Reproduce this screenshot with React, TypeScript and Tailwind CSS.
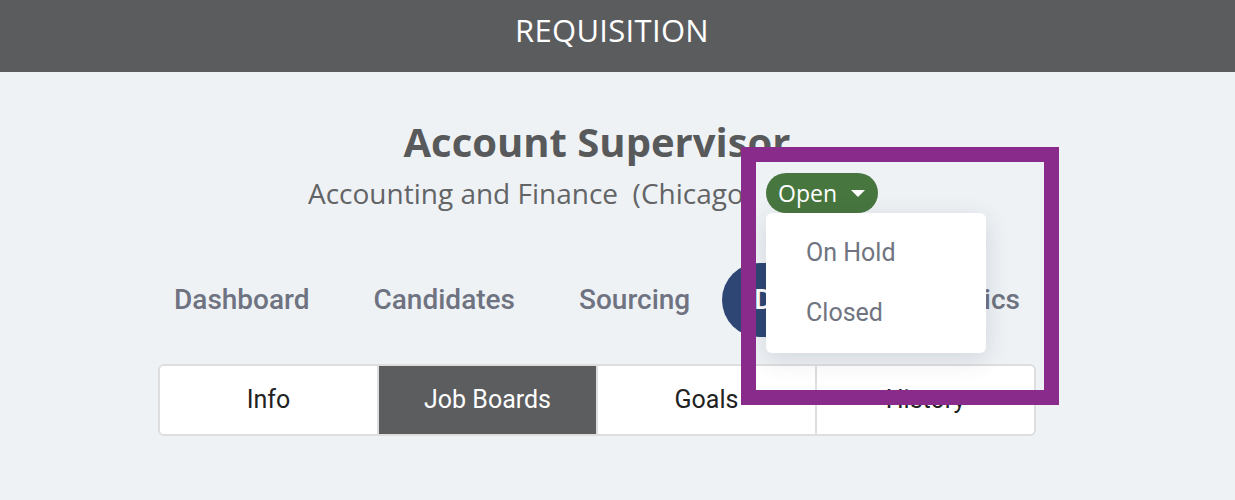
import { useState } from "react";

const navTabs = ["Dashboard", "Candidates", "Sourcing", "Details", "Analytics"];
const subTabs = ["Info", "Job Boards", "Goals", "History"];
const statusOptions = ["On Hold", "Closed"];

function Caret() {
	return (
		<svg className="h-[7px] w-[14px]" viewBox="0 0 14 7" fill="currentColor">
			<path d="M0 0h14L7 7z" />
		</svg>
	);
}

export default function App() {
	const [activeNav] = useState("Details");
	const [activeSub] = useState("Job Boards");

	return (
		<div className="min-h-[500px] w-full bg-[#eef2f5] font-['Open_Sans',sans-serif]">
			{/* Top bar */}
			<div className="flex h-[72px] items-center justify-center bg-[#5b5c5e] pr-[11px] pb-[12px]">
				<h1 className="text-[31px] font-normal tracking-[0.3px] text-white">REQUISITION</h1>
			</div>

			<div className="flex flex-col items-center pr-[41px]">
				{/* Title */}
				<h2 className="mt-[46px] text-[40px] leading-[48px] font-bold text-[#58595b]">
					Account Supervisor
				</h2>

				{/* Department + status */}
				<div className="mt-[7px] mr-2 flex h-[40px] items-center">
					<span className="text-[28px] whitespace-pre text-[#636466]">
						Accounting and Finance  (Chicago)
					</span>
					<div className="relative ml-[14px]">
						<button
							type="button"
							className="flex h-[40px] items-center gap-[14px] rounded-full bg-[#48763f] pr-[13px] pl-[12px] text-[23px] text-white"
						>
							Open
							<Caret />
						</button>

						{/* Status menu */}
						<div className="absolute top-[40px] left-0 z-20 w-[220px] rounded-md bg-white py-[10px] shadow-[0_6px_24px_rgba(40,50,70,0.14)]">
							{statusOptions.map((opt) => (
								<div
									key={opt}
									className="flex h-[60px] items-center pl-[40px] font-['Roboto',sans-serif] text-[25px] text-[#707480]"
								>
									{opt}
								</div>
							))}
						</div>

						{/* Highlight frame */}
						<div className="pointer-events-none absolute -top-[26px] -left-[25px] z-30 h-[258px] w-[318px] border-[15px] border-[#892b8b]" />
					</div>
				</div>

				{/* Main tabs */}
				<div className="mt-[50px] flex items-center font-['Roboto',sans-serif]">
					{navTabs.map((tab) => {
						const isActive = tab === activeNav;
						return (
							<div
								key={tab}
								className={`flex h-[74px] items-center rounded-full px-8 text-[28px] font-medium ${
									isActive ? "bg-[#2d4673] text-white" : "text-[#6f7381]"
								}`}
							>
								{tab}
							</div>
						);
					})}
				</div>

				{/* Sub tabs */}
				<div className="mt-[27px] flex h-[72px] w-[878px] overflow-hidden rounded-md border-2 border-[#dedede] bg-white font-['Roboto',sans-serif]">
					{subTabs.map((tab, i) => {
						const isActive = tab === activeSub;
						return (
							<div
								key={tab}
								className={`flex flex-1 items-center justify-center text-[25px] ${
									i > 0 ? "border-l-2 border-[#dedede]" : ""
								} ${isActive ? "border-[#5c5d5f] bg-[#5c5d5f] text-white" : "text-[#222]"}`}
							>
								{tab}
							</div>
						);
					})}
				</div>
			</div>
		</div>
	);
}
